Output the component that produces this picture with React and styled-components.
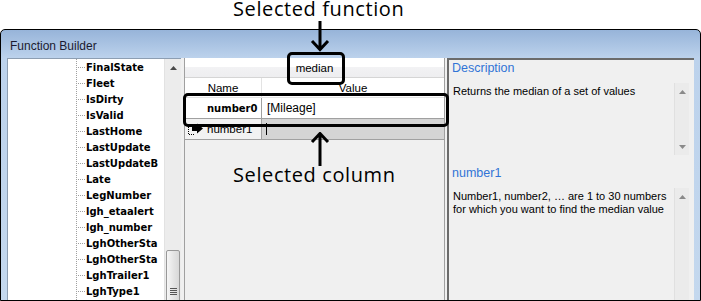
import styled, { createGlobalStyle } from "styled-components";

const GlobalStyle = createGlobalStyle`
  html, body {
    margin: 0;
    padding: 0;
    background: #fff;
  }
  body {
    width: 701px;
    height: 301px;
    overflow: hidden;
    font-family: "Liberation Sans", Arial, sans-serif;
  }
`;

const Page = styled.div`
  position: relative;
  width: 701px;
  height: 301px;
  padding-top: 29px;
  box-sizing: border-box;
`;

const Window = styled.div`
  height: 100%;
  box-sizing: border-box;
  border: 1px solid #000;
  border-radius: 5px 5px 0 0;
  background: linear-gradient(#97b4d9, #bcd2ec 28px, #c4d8ee);
  display: flex;
  flex-direction: column;
  overflow: hidden;
`;

const TitleBar = styled.div`
  height: 28px;
  flex: none;
  box-sizing: border-box;
  display: flex;
  align-items: center;
  padding: 3px 0 0 9px;
  font-size: 12px;
  color: #1b1b30;
`;

const Body = styled.div`
  flex: 1;
  min-height: 0;
  display: flex;
  padding: 0 6px;
`;

const Panels = styled.div`
  flex: 1;
  display: flex;
  background: #f0f0f0;
`;

/* left tree */
const TreePanel = styled.div`
  width: 174px;
  flex: none;
  box-sizing: border-box;
  display: flex;
  background: #fff;
  border-left: 1px solid #8d9eb2;
  border-top: 1px solid #8d9eb2;
  overflow: hidden;
`;

const TreeList = styled.ul`
  flex: 1;
  margin: 0;
  padding: 0 0 0 68px;
  list-style: none;
  background: repeating-linear-gradient(to bottom, #a0a0a0 0 1px, transparent 1px 2px) 68px 0 / 1px 100% no-repeat;
`;

const TreeItem = styled.li`
  height: 16px;
  display: flex;
  align-items: stretch;
  font-family: "DejaVu Sans", Verdana, sans-serif;
  font-weight: bold;
  font-size: 10px;
  color: #000;
  white-space: nowrap;
`;

const Connector = styled.span`
  width: 10px;
  flex: none;
  background: repeating-linear-gradient(to right, #a0a0a0 0 1px, transparent 1px 2px) left 8px / 9px 1px no-repeat;
`;

const ItemLabel = styled.span`
  display: flex;
  align-items: center;
`;

const VScroll = styled.div`
  width: ${(p) => p.$w || 17}px;
  flex: none;
  display: flex;
  flex-direction: column;
  align-items: center;
  background: ${(p) => p.$bg || "#ececec"};
  border-left: 1px solid ${(p) => p.$edge || "#e2e2e2"};
  box-sizing: border-box;
  overflow: hidden;
`;

const ScrollButton = styled.div`
  height: ${(p) => p.$h || 17}px;
  width: 100%;
  flex: none;
  display: flex;
  align-items: center;
  justify-content: center;
`;

const ScrollGap = styled.div`
  flex: 1;
`;

const Thumb = styled.div`
  width: 14px;
  height: 82px;
  flex: none;
  margin-top: ${(p) => p.$offset}px;
  box-sizing: border-box;
  border: 1px solid #989898;
  border-radius: 2px;
  background: linear-gradient(to right, #f6f6f6, #e4e4e4 55%, #d8d8d8);
  display: flex;
  align-items: center;
  justify-content: center;
`;

const Grip = styled.div`
  width: 7px;
  height: 7px;
  background: repeating-linear-gradient(to bottom, #555 0 1px, transparent 1px 2px);
`;

const Splitter = styled.div`
  width: ${(p) => p.$w}px;
  flex: none;
`;

/* middle grid */
const MiddlePanel = styled.div`
  width: 261px;
  flex: none;
  box-sizing: border-box;
  border-left: 1px solid #a0a0a0;
  border-right: 1px solid #a0a0a0;
  background: #f0f0f0;
  font-size: 11.5px;
  color: #000;
`;

const FunctionHeader = styled.div`
  height: 20px;
  box-sizing: border-box;
  display: flex;
  align-items: center;
  justify-content: center;
  border-bottom: 1px solid #d5d5d5;
  background: linear-gradient(#ffffff 0, #ffffff 45%, #f2f2f4 46%, #eeeef0 100%);
`;

const GridRow = styled.div`
  height: ${(p) => p.$h || 21}px;
  box-sizing: border-box;
  display: grid;
  grid-template-columns: 77px 1fr;
  border-bottom: 1px solid ${(p) => p.$line || "#a0a0a0"};
  background: ${(p) => p.$bg || "#fff"};
`;

const Cell = styled.div`
  display: flex;
  align-items: center;
  justify-content: ${(p) => (p.$center ? "center" : "flex-start")};
  padding-left: ${(p) => p.$pad ?? 0}px;
  border-right: ${(p) => (p.$divider ? `1px solid ${p.$divider}` : "none")};
  background: ${(p) => p.$bg || "transparent"};
  font-weight: ${(p) => (p.$bold ? "bold" : "normal")};
  font-family: ${(p) => (p.$bold ? '"DejaVu Sans", Verdana, sans-serif' : "inherit")};
  font-size: ${(p) => (p.$bold ? "10px" : p.$size ? `${p.$size}px` : "inherit")};
  gap: ${(p) => p.$gap || 0}px;
`;

const Caret = styled.span`
  width: 1px;
  height: 12px;
  background: #000;
`;

/* right info */
const InfoPanel = styled.div`
  flex: 1;
  display: flex;
  flex-direction: column;
  box-sizing: border-box;
  border-left: 2px solid #6b6b6b;
  border-top: 2px solid #6b6b6b;
  padding: 0 5px 0 3px;
`;

const InfoHeading = styled.div`
  height: 16px;
  line-height: 16px;
  margin-top: ${(p) => p.$gap}px;
  font-size: 12.5px;
  color: #3174d6;
`;

const InfoBox = styled.div`
  display: flex;
  margin-top: 7px;
  height: ${(p) => (p.$h ? `${p.$h}px` : "auto")};
  flex: ${(p) => (p.$h ? "none" : "1")};
`;

const InfoText = styled.div`
  flex: 1;
  padding: 2px 4px 0 1px;
  font-size: 11px;
  line-height: 13px;
  color: #000;
`;

/* annotations drawn over the screenshot */
const Callout = styled.div`
  position: absolute;
  left: ${(p) => p.$x}px;
  top: ${(p) => p.$y}px;
  width: ${(p) => p.$w}px;
  height: ${(p) => p.$h}px;
  box-sizing: border-box;
  border: 3px solid #000;
  border-radius: 5px;
`;

const Label = styled.div`
  position: absolute;
  left: ${(p) => p.$x}px;
  top: ${(p) => p.$y}px;
  font-family: "Open Sans", "Noto Sans", sans-serif;
  font-size: 20px;
  line-height: 18px;
  letter-spacing: 0.6px;
  color: #000;
  white-space: nowrap;
`;

const ArrowSvg = styled.svg`
  position: absolute;
  left: ${(p) => p.$x}px;
  top: ${(p) => p.$y}px;
`;

const UpTri = ({ color = "#555" }) => (
  <svg width="7" height="4" viewBox="0 0 7 4">
    <path d="M0 4 L3.5 0 L7 4Z" fill={color} />
  </svg>
);

const DownTri = ({ color = "#555" }) => (
  <svg width="7" height="4" viewBox="0 0 7 4">
    <path d="M0 0 L3.5 4 L7 0Z" fill={color} />
  </svg>
);

const NewRowIcon = () => (
  <svg width="16" height="12" viewBox="0 0 16 12">
    <path d="M0.5 4 V11.5 H6" fill="none" stroke="#000" strokeDasharray="1 1" />
    <path d="M4 3 H9 V0.5 L15 5.5 L9 10.5 V8 H4 Z" fill="#000" />
  </svg>
);

const fields = [
  "FinalState",
  "Fleet",
  "IsDirty",
  "IsValid",
  "LastHome",
  "LastUpdate",
  "LastUpdateB",
  "Late",
  "LegNumber",
  "lgh_etaalert",
  "lgh_number",
  "LghOtherSta",
  "LghOtherSta",
  "LghTrailer1",
  "LghType1",
];

export default function App() {
  return (
    <Page>
      <GlobalStyle />
      <Window>
        <TitleBar>Function Builder</TitleBar>
        <Body>
          <Panels>
            <TreePanel>
              <TreeList>
                {fields.map((f, i) => (
                  <TreeItem key={i}>
                    <Connector />
                    <ItemLabel>{f}</ItemLabel>
                  </TreeItem>
                ))}
              </TreeList>
              <VScroll>
                <ScrollButton>
                  <UpTri color="#4a4a4a" />
                </ScrollButton>
                <Thumb $offset={174}>
                  <Grip />
                </Thumb>
              </VScroll>
            </TreePanel>

            <Splitter $w={3} />

            <MiddlePanel>
              <FunctionHeader>median</FunctionHeader>
              <GridRow $h={20} $line="#e3e3e3">
                <Cell $center $divider="#e3e3e3">Name</Cell>
                <Cell $center>Value</Cell>
              </GridRow>
              <GridRow>
                <Cell $pad={22} $bold $divider="#a0a0a0">number0</Cell>
                <Cell $pad={5} $size={12}>[Mileage]</Cell>
              </GridRow>
              <GridRow $bg="#d4d4d4">
                <Cell $pad={3} $gap={3} $divider="#a0a0a0" $bg="#f2f2f2">
                  <NewRowIcon />
                  number1
                </Cell>
                <Cell $pad={4}>
                  <Caret />
                </Cell>
              </GridRow>
            </MiddlePanel>

            <Splitter $w={2} />

            <InfoPanel>
              <InfoHeading $gap={0}>Description</InfoHeading>
              <InfoBox $h={72}>
                <InfoText>Returns the median of a set of values</InfoText>
                <VScroll $w={15} $bg="#ebebeb" $edge="#e0e0e0">
                  <ScrollButton>
                    <UpTri color="#8a8a8a" />
                  </ScrollButton>
                  <ScrollGap />
                  <ScrollButton>
                    <DownTri color="#8a8a8a" />
                  </ScrollButton>
                </VScroll>
              </InfoBox>
              <InfoHeading $gap={10}>number1</InfoHeading>
              <InfoBox>
                <InfoText>
                  Number1, number2, … are 1 to 30 numbers for which you want to find the median value
                </InfoText>
                <VScroll $w={15} $bg="#ebebeb" $edge="#e0e0e0">
                  <ScrollButton>
                    <UpTri color="#8a8a8a" />
                  </ScrollButton>
                </VScroll>
              </InfoBox>
            </InfoPanel>
          </Panels>
        </Body>
      </Window>

      <Label $x={233} $y={0}>Selected function</Label>
      <ArrowSvg $x={310} $y={21} width="20" height="31" viewBox="0 0 20 31">
        <path d="M10 0 V28 M2 20 L10 28.5 L18 20" fill="none" stroke="#000" strokeWidth="3" />
      </ArrowSvg>
      <Callout $x={287} $y={52} $w={58} $h={33} />
      <Callout $x={183} $y={93} $w={266} $h={34} />
      <ArrowSvg $x={310} $y={132} width="20" height="34" viewBox="0 0 20 34">
        <path d="M10 34 V2 M2 10 L10 1.5 L18 10" fill="none" stroke="#000" strokeWidth="3" />
      </ArrowSvg>
      <Label $x={233} $y={166}>Selected column</Label>
    </Page>
  );
}
